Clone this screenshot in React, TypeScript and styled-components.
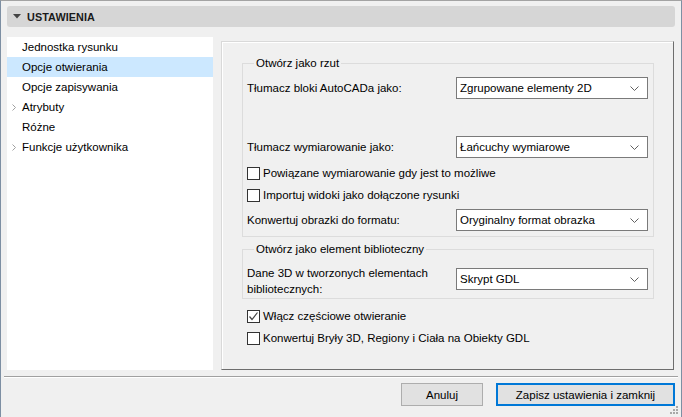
import React from 'react';
import styled, { createGlobalStyle } from 'styled-components';

const FONT = `'Liberation Sans', Arial, sans-serif`;

const GlobalStyle = createGlobalStyle`
  html, body {
    margin: 0;
    padding: 0;
    background: #f0f0f0;
  }
  * {
    box-sizing: border-box;
  }
`;

const Window = styled.div`
  position: relative;
  width: 682px;
  height: 417px;
  background: #f0f0f0;
  border-top: 1px solid #a3a3a3;
  border-left: 1px solid #7d8fa3;
  border-right: 1px solid #7d8fa3;
  font-family: ${FONT};
  font-size: 11.5px;
  color: #000;
  display: flex;
  flex-direction: column;
`;

const Header = styled.div`
  margin: 5px 6px 0 6px;
  height: 21px;
  background: #d6d6d6;
  border-radius: 3px;
  display: flex;
  align-items: center;
  gap: 6px;
  padding-left: 6px;
  font-weight: bold;
  font-size: 10.8px;
  color: #1a1a1a;
  letter-spacing: 0.1px;
`;

const Main = styled.div`
  margin: 10px 0 0 6px;
  display: flex;
  align-items: flex-start;
  gap: 8px;
`;

const NavList = styled.ul`
  list-style: none;
  margin: 0;
  padding: 0;
  width: 206px;
  height: 333px;
  background: #fff;
`;

const NavItem = styled.li<{ $active?: boolean }>`
  position: relative;
  height: 20px;
  line-height: 20px;
  padding-left: 15px;
  background: ${(p) => (p.$active ? '#cce8ff' : 'transparent')};
  white-space: nowrap;
`;

const NavArrow = styled.svg`
  position: absolute;
  left: 5px;
  top: 7px;
`;

const Panel = styled.div`
  margin-top: 4px;
  width: 453px;
  height: 329px;
  border: 1px solid;
  border-color: #d9d9d9 #6d6d6d #6d6d6d #d9d9d9;
  box-shadow: inset 1px 1px 0 #ffffff;
  padding: 13px 19px 0 20px;
  display: flex;
  flex-direction: column;
`;

const Group = styled.fieldset<{ $top?: number; $mt?: number }>`
  margin: ${(p) => p.$mt ?? 0}px 0 0 0;
  min-width: 0;
  border: 1px solid #dcdcdc;
  padding: ${(p) => p.$top ?? 6}px 5px 5px 4px;
`;

const Legend = styled.legend`
  margin-left: 7px;
  padding: 0 2px;
  line-height: 16px;
  font-size: 11.5px;
`;

const FieldRow = styled.div<{ $mt?: number; $align?: string }>`
  display: grid;
  grid-template-columns: 1fr 192px;
  align-items: ${(p) => p.$align ?? 'center'};
  margin-top: ${(p) => p.$mt ?? 0}px;
`;

const FieldLabel = styled.div`
  line-height: 16px;
`;

const SelectBox = styled.div<{ $mt?: number }>`
  height: 22px;
  margin-top: ${(p) => p.$mt ?? 0}px;
  background: #fff;
  border: 1px solid #7a7a7a;
  padding: 0 8px 0 3px;
  display: flex;
  align-items: center;
  justify-content: space-between;
  white-space: nowrap;
`;

const CheckRow = styled.label<{ $mt?: number; $ml?: number }>`
  display: flex;
  align-items: center;
  gap: 3px;
  height: 20px;
  margin-top: ${(p) => p.$mt ?? 0}px;
  margin-left: ${(p) => p.$ml ?? 0}px;
  white-space: nowrap;
`;

const CheckBox = styled.span`
  width: 13px;
  height: 13px;
  background: #fff;
  border: 1px solid #333;
  display: flex;
  align-items: center;
  justify-content: center;
`;

const Separator = styled.div`
  margin: 6px 3px 0 3px;
  height: 2px;
  border-top: 1px solid #a0a0a0;
  border-bottom: 1px solid #ffffff;
`;

const Footer = styled.div`
  margin-top: 5px;
  padding-right: 6px;
  display: flex;
  justify-content: flex-end;
  gap: 13px;
`;

const Button = styled.button<{ $primary?: boolean }>`
  height: 23px;
  padding: 0;
  width: ${(p) => (p.$primary ? 179 : 82)}px;
  background: #e1e1e1;
  border: ${(p) => (p.$primary ? '2px solid #0078d7' : '1px solid #adadad')};
  font-family: ${FONT};
  font-size: 11.5px;
  color: #000;
`;

const Grip = styled.svg`
  position: absolute;
  right: 2px;
  bottom: 2px;
`;

function Chevron (): React.ReactElement {
  return (
    <svg width='9' height='5' viewBox='0 0 9 5'>
      <path d='M0.5 0.5 L4.5 4.5 L8.5 0.5' fill='none' stroke='#606060' strokeWidth='1' />
    </svg>
  );
}

function Select ({ value, mt }: { value: string; mt?: number }): React.ReactElement {
  return (
    <SelectBox $mt={mt}>
      <span>{value}</span>
      <Chevron />
    </SelectBox>
  );
}

function Check ({ label, checked, mt, ml }: { label: string; checked?: boolean; mt?: number; ml?: number }): React.ReactElement {
  return (
    <CheckRow $mt={mt} $ml={ml}>
      <CheckBox>
        {checked && (
          <svg width='11' height='11' viewBox='0 0 11 11'>
            <path d='M1.5 5.5 L4 8.5 L9.5 1.5' fill='none' stroke='#444' strokeWidth='1.2' />
          </svg>
        )}
      </CheckBox>
      <span>{label}</span>
    </CheckRow>
  );
}

const NAV = [
  { name: 'Jednostka rysunku' },
  { name: 'Opcje otwierania', active: true },
  { name: 'Opcje zapisywania' },
  { name: 'Atrybuty', expandable: true },
  { name: 'Różne' },
  { name: 'Funkcje użytkownika', expandable: true }
];

export default function App (): React.ReactElement {
  return (
    <>
      <GlobalStyle />
      <Window>
        <Header>
          <svg width='8' height='5' viewBox='0 0 8 5'>
            <path d='M0 0 L8 0 L4 4.5 Z' fill='#444' />
          </svg>
          <span>USTAWIENIA</span>
        </Header>

        <Main>
          <NavList>
            {NAV.map((item) => (
              <NavItem key={item.name} $active={item.active}>
                {item.expandable && (
                  <NavArrow width='4' height='7' viewBox='0 0 4 7'>
                    <path d='M0.5 0.5 L3.5 3.5 L0.5 6.5' fill='none' stroke='#a0a0a0' strokeWidth='1' />
                  </NavArrow>
                )}
                {item.name}
              </NavItem>
            ))}
          </NavList>

          <Panel>
            <Group $top={6}>
              <Legend>Otwórz jako rzut</Legend>
              <FieldRow>
                <FieldLabel>Tłumacz bloki AutoCADa jako:</FieldLabel>
                <Select value='Zgrupowane elementy 2D' />
              </FieldRow>
              <FieldRow $mt={37}>
                <FieldLabel>Tłumacz wymiarowanie jako:</FieldLabel>
                <Select value='Łańcuchy wymiarowe' />
              </FieldRow>
              <Check mt={5} label='Powiązane wymiarowanie gdy jest to możliwe' />
              <Check mt={2} label='Importuj widoki jako dołączone rysunki' />
              <FieldRow $mt={4}>
                <FieldLabel>Konwertuj obrazki do formatu:</FieldLabel>
                <Select value='Oryginalny format obrazka' />
              </FieldRow>
            </Group>

            <Group $top={8} $mt={4} style={{ paddingBottom: 1 }}>
              <Legend>Otwórz jako element biblioteczny</Legend>
              <FieldRow $align='start'>
                <FieldLabel>Dane 3D w tworzonych elementach<br />bibliotecznych:</FieldLabel>
                <Select mt={3} value='Skrypt GDL' />
              </FieldRow>
            </Group>

            <Check mt={7} ml={5} checked label='Włącz częściowe otwieranie' />
            <Check mt={2} ml={5} label='Konwertuj Bryły 3D, Regiony i Ciała na Obiekty GDL' />
          </Panel>
        </Main>

        <Separator />

        <Footer>
          <Button>Anuluj</Button>
          <Button $primary>Zapisz ustawienia i zamknij</Button>
        </Footer>

        <Grip width='10' height='10' viewBox='0 0 10 10'>
          <g fill='#a8a8a8'>
            <rect x='7' y='1' width='2' height='2' />
            <rect x='4' y='4' width='2' height='2' />
            <rect x='7' y='4' width='2' height='2' />
            <rect x='1' y='7' width='2' height='2' />
            <rect x='4' y='7' width='2' height='2' />
            <rect x='7' y='7' width='2' height='2' />
          </g>
        </Grip>
      </Window>
    </>
  );
}
